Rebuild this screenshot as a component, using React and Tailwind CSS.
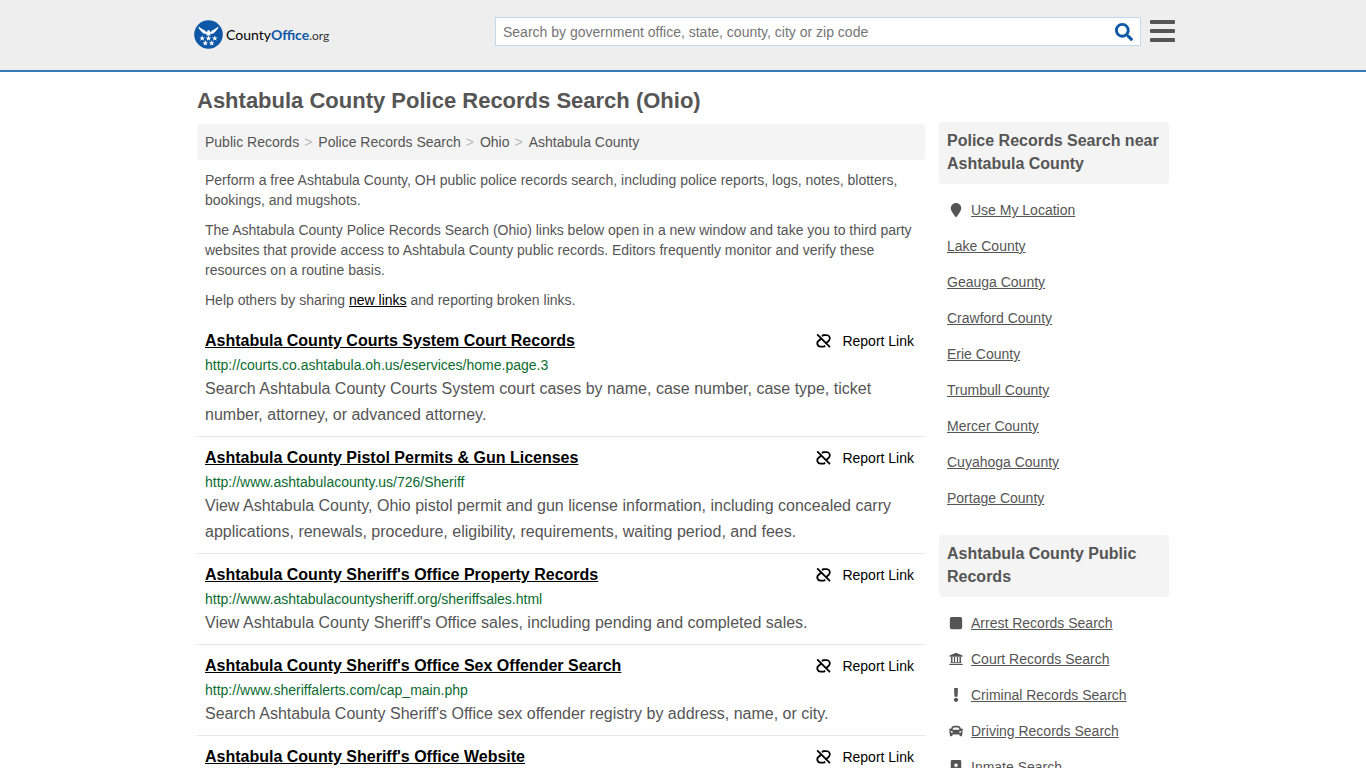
import React from "react";
import { FaSearch, FaExclamation, FaCar, FaPortrait } from "react-icons/fa";
import { FaLocationPin, FaSquare } from "react-icons/fa6";

const crumbs = ["Public Records", "Police Records Search", "Ohio", "Ashtabula County"];

const results = [
  {
    title: "Ashtabula County Courts System Court Records",
    url: "http://courts.co.ashtabula.oh.us/eservices/home.page.3",
    text: "Search Ashtabula County Courts System court cases by name, case number, case type, ticket number, attorney, or advanced attorney.",
  },
  {
    title: "Ashtabula County Pistol Permits & Gun Licenses",
    url: "http://www.ashtabulacounty.us/726/Sheriff",
    text: "View Ashtabula County, Ohio pistol permit and gun license information, including concealed carry applications, renewals, procedure, eligibility, requirements, waiting period, and fees.",
  },
  {
    title: "Ashtabula County Sheriff's Office Property Records",
    url: "http://www.ashtabulacountysheriff.org/sheriffsales.html",
    text: "View Ashtabula County Sheriff's Office sales, including pending and completed sales.",
  },
  {
    title: "Ashtabula County Sheriff's Office Sex Offender Search",
    url: "http://www.sheriffalerts.com/cap_main.php",
    text: "Search Ashtabula County Sheriff's Office sex offender registry by address, name, or city.",
  },
  {
    title: "Ashtabula County Sheriff's Office Website",
  },
];

function CourtIcon({ className }) {
  return (
    <svg viewBox="0 0 14 14" className={className} fill="currentColor" aria-hidden="true">
      <path d="M7 .8 13.500 3.500V4.700H.5V3.500Z" />
      <path d="M2 5H3.500V10.300H2ZM4.900 5H6.100V10.300H4.900ZM7.900 5H9.100V10.300H7.900ZM10.500 5H12V10.300H10.500Z" />
      <path d="M1.300 10.300H12.700V11.200H1.300ZM.3 11.900H13.700V13H.3Z" />
    </svg>
  );
}

const nearby = [
  { label: "Use My Location", Icon: FaLocationPin },
  { label: "Lake County" },
  { label: "Geauga County" },
  { label: "Crawford County" },
  { label: "Erie County" },
  { label: "Trumbull County" },
  { label: "Mercer County" },
  { label: "Cuyahoga County" },
  { label: "Portage County" },
];

const records = [
  { label: "Arrest Records Search", Icon: FaSquare },
  { label: "Court Records Search", Icon: CourtIcon },
  { label: "Criminal Records Search", Icon: FaExclamation },
  { label: "Driving Records Search", Icon: FaCar },
  { label: "Inmate Search", Icon: FaPortrait },
];

function Logo() {
  const star = "M0-2.9.8-.9 2.800-.9 1.200.4 1.800 2.400 0 1.200-1.800 2.400-1.200.4-2.800-.9-.8-.9Z";
  const stars = [[8.2, 18.4], [14.5, 18.4], [20.8, 18.4], [11.3, 23.2], [17.700, 23.2]];
  return (
    <a href="#" className="flex items-center gap-[3px] text-black">
      <svg viewBox="0 0 29 29" className="size-[29px]" aria-hidden="true">
        <circle cx="14.5" cy="14.5" r="14.3" fill="#0d57a7" />
        <path
          fill="#fff"
          d="M4.500 6.200c1.500 2 4.200 2.600 6.300 4.400.9.800 1.500 1.500 2.200 2l.3-1.900 1.200-.8 1.500.8.200 1.900c.6-.5 1.100-1.200 2-2 2.100-1.800 4.800-2.400 6.300-4.400-.1 1.900-.8 3.100-1.900 3.900-.3 1-1 1.700-2 2.100-.5.900-1.400 1.400-2.700 1.600l-1.900.3.700 1.400h-4.600l.7-1.400-1.900-.3c-1.300-.2-2.200-.7-2.700-1.600-1-.4-1.700-1.100-2-2.100-1.100-.8-1.600-2-1.700-3.900Z"
        />
        {stars.map(([x, y]) => (
          <path key={`${x}-${y}`} d={star} fill="#fff" transform={`translate(${x} ${y})`} />
        ))}
      </svg>
      <span className="font-[Lato,sans-serif] text-sm leading-5">
        County<b className="text-[#0d57a7]">Office</b>
        <span className="text-xs text-[#333]">.org</span>
      </span>
    </a>
  );
}

function UnlinkIcon() {
  return (
    <svg viewBox="0 0 16 16" className="size-4" fill="none" stroke="currentColor" strokeWidth="1.800" aria-hidden="true">
      <path d="M1.200 1.400 14 14.200" />
      <path d="M6 3.200 7.200 2.200H10.600A3.200 3.200 0 0 1 12.800 7.800L9.600 10.600" />
      <path d="M9.200 12.600 8 13.600H4.600A3.200 3.200 0 0 1 2.400 8L5.600 5.200" />
    </svg>
  );
}

function SideSection({ title, items, className }) {
  return (
    <section className={className}>
      <h2 className="rounded bg-[#f4f4f4] px-2 pt-[7px] pb-[9px] text-base leading-[23px] font-bold">{title}</h2>
      <ul className="flex flex-col gap-4 px-2 pt-4">
        {items.map(({ label, Icon }) => (
          <li key={label} className="leading-5">
            <a href="#" className="flex items-center">
              {Icon && (
                <span className="mr-[6px] flex w-[18px] justify-center">
                  <Icon className="size-[14px]" />
                </span>
              )}
              <span className="underline">{label}</span>
            </a>
          </li>
        ))}
      </ul>
    </section>
  );
}

export default function App() {
  return (
    <div className="h-screen overflow-hidden bg-white font-['Liberation_Sans',Arial,sans-serif] text-sm text-[#555]">
      <header className="border-b-2 border-[#337ab7] bg-[#eee]">
        <div className="mx-auto flex h-[70px] max-w-[984px] items-start pl-[3px]">
          <div className="w-[301px] pt-5">
            <Logo />
          </div>
          <form className="mt-[17px] flex h-[29px] flex-1 items-center border border-[#c3d9ea] bg-white pr-[7px]">
            <input
              type="text"
              aria-label="Search"
              placeholder="Search by government office, state, county, city or zip code"
              className="h-full min-w-0 flex-1 px-[7px] outline-none placeholder:text-[#757575]"
            />
            <button type="submit" aria-label="Submit search" className="text-[#0d57a7]">
              <FaSearch className="size-[18px]" />
            </button>
          </form>
          <button type="button" aria-label="Menu" className="mt-5 ml-[9px] flex w-[25px] flex-col gap-[5px]">
            <span className="h-1 rounded-[1px] bg-[#555]" />
            <span className="h-1 rounded-[1px] bg-[#555]" />
            <span className="h-1 rounded-[1px] bg-[#555]" />
          </button>
        </div>
      </header>

      <div className="mx-auto max-w-[972px]">
        <h1 className="pt-[17px] text-[22px] leading-6 font-bold">Ashtabula County Police Records Search (Ohio)</h1>
        <div className="flex items-start gap-[14px]">
          <main className="mt-[11px] min-w-0 flex-1">
            <nav aria-label="Breadcrumb" className="rounded bg-[#f4f4f4] px-2 py-2 leading-5">
              <ol className="flex">
                {crumbs.map((c, i) => (
                  <li key={c} className="flex">
                    {i > 0 && <span className="pr-[6px] pl-[5px] text-[#bbb]">&gt;</span>}
                    <a href="#">{c}</a>
                  </li>
                ))}
              </ol>
            </nav>
            <div className="flex flex-col gap-[10px] px-2 pt-[10px] leading-5">
              <p>
                Perform a free Ashtabula County, OH public police records search, including police reports, logs, notes,
                blotters, bookings, and mugshots.
              </p>
              <p>
                The Ashtabula County Police Records Search (Ohio) links below open in a new window and take you to third
                party websites that provide access to Ashtabula County public records. Editors frequently monitor and
                verify these resources on a routine basis.
              </p>
              <p>
                Help others by sharing{" "}
                <a href="#" className="text-black underline">
                  new links
                </a>{" "}
                and reporting broken links.
              </p>
            </div>
            <div className="pt-[10px]">
              {results.map((r) => (
                <article key={r.title} className="border-b border-[#e7e7e7] px-2 pt-[9px] pb-2">
                  <div className="flex items-center justify-between pr-[3px] text-black">
                    <h2 className="text-base leading-6 font-bold">
                      <a href="#" className="underline">
                        {r.title}
                      </a>
                    </h2>
                    <button type="button" className="flex items-center gap-[10px]">
                      <UnlinkIcon />
                      Report Link
                    </button>
                  </div>
                  {r.url && <div className="pt-px leading-[22px] text-[#0a6b2f]">{r.url}</div>}
                  {r.text && <p className="text-base leading-[26px]">{r.text}</p>}
                </article>
              ))}
            </div>
          </main>
          <aside className="mt-[9px] w-[230px] shrink-0">
            <SideSection title="Police Records Search near Ashtabula County" items={nearby} />
            <SideSection title="Ashtabula County Public Records" items={records} className="mt-[27px]" />
          </aside>
        </div>
      </div>
    </div>
  );
}
